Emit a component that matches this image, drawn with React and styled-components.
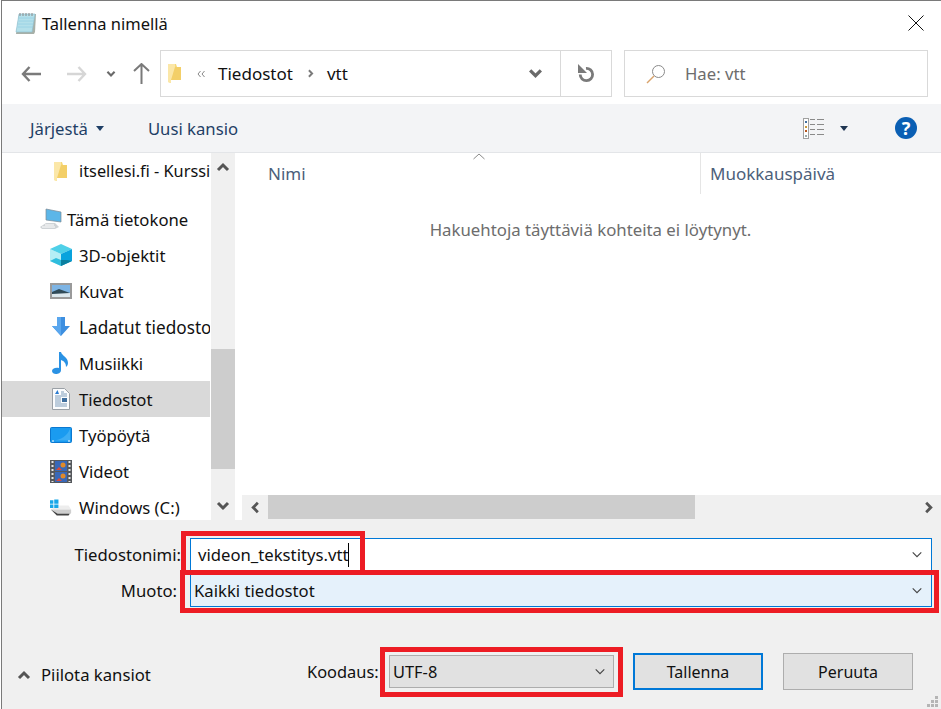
import React from "react";
import styled, { createGlobalStyle } from "styled-components";

const Global = createGlobalStyle`
  html, body { margin: 0; padding: 0; background: #fff; }
  body { font-family: "Noto Sans", "Open Sans", sans-serif; }
`;
const Page = styled.div`
  position: relative; width: 941px; height: 709px; overflow: hidden; background: #fff;
  padding-left: 1px; box-sizing: border-box;
`;
const Win = styled.div`
  height: 100%; display: flex; flex-direction: column; box-sizing: border-box;
  border-left: 1px solid #7a7a7a; border-top: 1px solid #7a7a7a; font-size: 16.7px; color: #111;
`;
const TitleBar = styled.div`
  height: 43px; flex: none; display: flex; align-items: center; padding: 0 17px 0 12px;
`;
const TitleText = styled.span`
  margin-left: 4px; font-size: 16.5px; flex: 1; position: relative; top: 1px;
`;
const NavBar = styled.div`
  height: 60px; flex: none; box-sizing: border-box; display: flex; align-items: flex-start; padding: 6px 13px 0 0;
`;
const NavBtn = styled.div`
  width: ${p => p.$w}px; height: 47px; flex: none; display: flex; align-items: center; justify-content: center;
`;
const Address = styled.div`
  width: 452px; height: 47px; margin-left: 5px; flex: none; box-sizing: border-box; border: 1px solid #d9d9d9;
  display: flex; align-items: center;
`;
const Crumbs = styled.div`
  flex: 1; display: flex; align-items: center; padding-left: 6px; font-size: 17px;
`;
const CrumbGap = styled.span`
  display: inline-flex; margin-left: ${p => p.$l}px;
`;
const AddrBtn = styled.div`
  width: ${p => p.$w}px; height: 100%; flex: none; display: flex; align-items: center; justify-content: center;
  border-left: ${p => (p.$div ? "1px solid #d9d9d9" : "none")};
`;
const Search = styled.div`
  width: 304px; height: 47px; margin-left: 12px; flex: none; box-sizing: border-box; border: 1px solid #d9d9d9;
  display: flex; align-items: center; padding-left: 21px; gap: 19px; color: #6d6d6d; font-size: 16.7px;
`;
const Toolbar = styled.div`
  height: 49px; flex: none; box-sizing: border-box; background: #f3f4f6; border-bottom: 1px solid #e3e5e8; display: flex; align-items: center;
  padding: 0 24px 0 28px; color: #1f3f66; font-size: 16.7px;
`;
const ToolBtn = styled.div`
  display: flex; align-items: center; margin-right: ${p => p.$mr || 0}px;
`;
const Spacer = styled.div`flex: 1;`;
const Help = styled.div`
  width: 22px; height: 22px; border-radius: 50%; background: #0a5fb4; color: #fff; font-weight: 700;
  font-size: 18px; line-height: 22px; text-align: center; margin-left: 47px;
`;
const Content = styled.div`
  height: 367px; flex: none; display: flex; overflow: hidden;
`;
const Sidebar = styled.div`
  width: 208px; flex: none; overflow: hidden; background: #fff;
`;
const Row = styled.div`
  height: 36px; display: flex; align-items: center; box-sizing: border-box; white-space: nowrap; overflow: hidden;
  padding-left: ${p => p.$pl}px; margin-bottom: ${p => p.$mb || 0}px; background: ${p => (p.$sel ? "#d9d9d9" : "transparent")};
  font-size: ${p => p.$fs || 16.7}px;
`;
const RowIcon = styled.span`
  width: ${p => p.$w}px; height: 24px; flex: none; display: flex; align-items: center; justify-content: center;
  margin-right: ${p => p.$mr}px;
`;
const VScroll = styled.div`
  width: 24px; margin-left: 1px; flex: none; background: #f0f0f0; display: flex; flex-direction: column; align-items: stretch;
`;
const VArrow = styled.div`
  height: 28px; flex: none; display: flex; align-items: center; justify-content: center; margin-top: ${p => p.$mt || 0}px;
`;
const VThumb = styled.div`
  height: 120px; flex: none; background: #cdcdcd; margin-top: 168px;
`;
const Main = styled.div`
  flex: 1; margin-left: 5px; display: flex; flex-direction: column; min-width: 0;
`;
const Header = styled.div`
  height: 41px; flex: none; display: flex; position: relative; color: #4c607a; font-size: 17px;
`;
const HeadCell = styled.div`
  width: ${p => p.$w}px; flex: none; box-sizing: border-box; padding: 9px 0 0 ${p => p.$pl}px; border-right: ${p => (p.$div ? "1px solid #e5e5e5" : "none")};
`;
const SortCaret = styled.svg`
  position: absolute; left: 233px; top: 0;
`;
const Empty = styled.div`
  flex: 1; text-align: center; color: #6d6d6d; font-size: 16.8px; padding-top: 24px;
`;
const HScroll = styled.div`
  height: 25px; flex: none; background: #f0f0f0; margin-left: 2px; display: flex; align-items: center;
`;
const HArrow = styled.div`
  width: 26px; height: 100%; flex: none; display: flex; align-items: center; justify-content: center;
`;
const HThumb = styled.div`
  width: 427px; height: 24px; align-self: flex-start; background: #cdcdcd;
`;
const Bottom = styled.div`
  flex: 1; background: #f0f0f0; position: relative; display: flex; flex-direction: column; padding-top: 18px;
`;
const FieldRow = styled.div`
  display: flex; align-items: center; height: 33px; margin-bottom: ${p => p.$mb || 0}px;
`;
const Label = styled.div`
  width: ${p => p.$w}px; flex: none; text-align: right; font-size: 16.7px; color: #111;
`;
const Field = styled.div`
  margin-left: ${p => p.$ml}px; width: 742px; height: 100%; box-sizing: border-box; border: 1px solid #0078d7;
  background: ${p => p.$bg}; display: flex; align-items: center; font-size: 16.7px; padding: 0 8px 0 ${p => p.$pl}px;
`;
const FieldText = styled.span`flex: 1; display: flex; align-items: center;`;
const TextCaret = styled.span`
  display: inline-block; width: 1px; height: 24px; background: #000;
`;
const Footer = styled.div`
  display: flex; align-items: center; margin-top: 46px; height: 37px;
`;
const Toggle = styled.div`
  display: flex; align-items: center; margin-left: 15px; width: 290px; gap: 10px; font-size: 16.7px; position: relative; top: 3px;
`;
const EncLabel = styled.div`font-size: 16.4px; width: 82px;`;
const Select = styled.div`
  width: 225px; height: 33px; box-sizing: border-box; border: 1px solid #adadad; background: #e1e1e1; flex: none;
  display: flex; align-items: center; justify-content: space-between; padding: 0 7px 0 3px; font-size: 16.4px;
`;
const Button = styled.div`
  width: 130px; height: 37px; box-sizing: border-box; flex: none; margin-left: ${p => p.$ml}px;
  background: #e1e1e1; border: ${p => (p.$primary ? "2px solid #0078d7" : "1px solid #adadad")};
  display: flex; align-items: center; justify-content: center; font-size: 16px;
`;
const Grip = styled.svg`
  position: absolute; right: 3px; bottom: 1px;
`;
const Mark = styled.div`
  position: absolute; left: ${p => p.$x}px; top: ${p => p.$y}px; width: ${p => p.$w}px; height: ${p => p.$h}px;
  box-sizing: border-box; border: 5px solid #ed1c24; pointer-events: none;
`;

const Folder = ({ w = 15, h = 21 }) => (
  <svg width={w} height={h} viewBox="0 0 15 21">
    <path d="M1 1h8l1 3h4v13H4v3l-3-1z" fill="#f6d878" />
    <path d="M1 1h7v15l-4 1v3l-3-1z" fill="#fbe7a8" />
    <path d="M8 4h6v13H4z" fill="#f3cf68" />
  </svg>
);
const Notepad = () => (
  <svg width="24" height="24" viewBox="0 0 24 24">
    <path d="M5 3h17l-1 18l-1 2H2z" fill="#a8b0a8" />
    <path d="M5 3h16l-3 18H2z" fill="#b4e0ea" stroke="#8cc0d2" strokeWidth=".6" />
    <path d="M5 7h15M4.500 10h15M4 13h15M3.500 16h15" stroke="#8ccbe2" strokeOpacity=".6" />
    <path d="M6 2v3M9 2v3M12 2v3M15 2v3M18 2v3" stroke="#888" />
  </svg>
);
const Computer = () => (
  <svg width="24" height="22" viewBox="0 0 24 22">
    <path d="M7 1l15 3v10L7 12z" fill="#5cb6e8" stroke="#7d8a94" strokeWidth=".7" />
    <path d="M1 19l6-4h9l4 4-4 2H3z" fill="#cfd3d6" />
    <path d="M3 19h13M6 17h9" stroke="#fff" />
  </svg>
);
const Cube = () => (
  <svg width="22" height="22" viewBox="0 0 22 22">
    <path d="M0 5l11 5v12L0 17z" fill="#b5eef5" />
    <path d="M11 0l11 5-11 5L0 5z" fill="#4fd0e8" />
    <path d="M11 10l11-5v12l-11 5z" fill="#09a3dd" />
    <path d="M0 17l6-3 5 2v6z" fill="#2fbddd" />
    <path d="M11 16l6 0 5 1-11 5z" fill="#0b7f9f" />
  </svg>
);
const Picture = () => (
  <svg width="22" height="16" viewBox="0 0 22 16">
    <rect x="1" y="1" width="20" height="14" fill="#fff" stroke="#9a9a9a" strokeWidth="2" />
    <rect x="2" y="2" width="18" height="12" fill="#7db4e4" />
    <path d="M2 9l7-3 11 4v2H2z" fill="#2f4a58" />
    <path d="M2 11l18-1v4H2z" fill="#dce8ee" />
  </svg>
);
const Download = () => (
  <svg width="20" height="20" viewBox="0 0 20 20">
    <path d="M6 0h8v9h5l-9 10L1 9h5z" fill="#3d8fe0" />
    <path d="M6 0h4v19L1 9h5z" fill="#5aa7ee" />
  </svg>
);
const Music = () => (
  <svg width="18" height="22" viewBox="0 0 18 22">
    <path d="M7 0h2c1 4 7 5 7 11 0 2-1 3-2 4 0-4-2-6-5-7v10c0 3-3 4-5 4s-4-1-4-3 3-4 7-3z" fill="#2a92e4" />
  </svg>
);
const Docs = () => (
  <svg width="18" height="22" viewBox="0 0 18 22">
    <path d="M.5.5h12l5 5v16H.5z" fill="#fbfcfd" stroke="#9aa0a6" />
    <path d="M3 6l2.500-4 1.500 4z" fill="#2a7bd0" />
    <path d="M9 4h3M9 6h6M3 8h12M3 10h6M3 12h6M3 14h6M3 16h12M3 18h12" stroke="#7f9dbb" />
    <rect x="10" y="10" width="5" height="4" fill="#3f6f9f" />
  </svg>
);
const Desktop = () => (
  <svg width="22" height="16" viewBox="0 0 22 16">
    <rect x=".5" y=".5" width="21" height="15" rx="1" fill="#1a9bf0" stroke="#0b78d0" />
    <path d="M3 13.500C11 13 17 9 20 2v11.500z" fill="#3cadf4" />
    <path d="M2 14h2M18 14h2" stroke="#fff" />
  </svg>
);
const Film = () => (
  <svg width="22" height="23" viewBox="0 0 22 23">
    <rect width="22" height="23" fill="#55585c" />
    <rect x="5" y="1" width="12" height="10" fill="#3868b8" />
    <rect x="5" y="12" width="12" height="10" fill="#3868b8" />
    <path d="M6 10l3-3 3 3zM6 21l3-3 3 3z" fill="#d84a3a" />
    <circle cx="13" cy="5" r="2.500" fill="#e08a2a" /><circle cx="13" cy="16" r="2.500" fill="#e08a2a" />
    <path d="M2.500 1v21M19.500 1v21" stroke="#e6e6e6" strokeDasharray="2 2" strokeWidth="2" />
  </svg>
);
const Drive = () => (
  <svg width="26" height="19" viewBox="0 0 26 19">
    <path d="M0 1h4v4H0zM5 0h5v5H5zM0 6h4v4H0zM5 6h5v4H5z" fill="#19a7e8" />
    <path d="M11 7h11l3 5-24 0 3-2h7z" fill="#ededed" />
    <path d="M1 12h24v4l-2 2H8z" fill="#cfcfcf" />
    <path d="M1 12l8 5h14l-1 2H8z" fill="#444" />
  </svg>
);
const Chev = ({ dir = "down", size = 14, color = "#6a6a6a", sw = 3, box = 14 }) => {
  const d = { down: "M2 4l5 5 5-5", up: "M2 10l5-5 5 5", left: "M9.500 2l-5 5 5 5", right: "M4.500 2l5 5-5 5" }[dir];
  return (
    <svg width={size} height={size} viewBox={`0 0 ${box} ${box}`}>
      <path d={d} fill="none" stroke={color} strokeWidth={sw} />
    </svg>
  );
};

const items = [
  ["3D-objektit", <Cube />],
  ["Kuvat", <Picture />],
  ["Ladatut tiedostot", <Download />, false, 17.2],
  ["Musiikki", <Music />],
  ["Tiedostot", <Docs />, true],
  ["Työpöytä", <Desktop />],
  ["Videot", <Film />],
  ["Windows (C:)", <Drive />],
];

export default function App() {
  return (
    <Page>
      <Global />
      <Win>
        <TitleBar>
          <Notepad />
          <TitleText>Tallenna nimellä</TitleText>
          <svg width="16" height="16" viewBox="0 0 16 16"><path d="M.5.5l15 15M15.500.5l-15 15" stroke="#111" fill="none" /></svg>
        </TitleBar>
        <NavBar>
          <NavBtn $w={57}>
            <svg width="20" height="16" viewBox="0 0 20 16"><path d="M8.500 1L2 8l6.500 7M2 8h18" fill="none" stroke="#7a7a7a" strokeWidth="2.400" /></svg>
          </NavBtn>
          <NavBtn $w={35}>
            <svg width="20" height="16" viewBox="0 0 20 16"><path d="M11.500 1L18 8l-6.500 7M18 8H0" fill="none" stroke="#d6d6d6" strokeWidth="2.400" /></svg>
          </NavBtn>
          <NavBtn $w={33}><Chev size={10} /></NavBtn>
          <NavBtn $w={28}>
            <svg width="17" height="21" viewBox="0 0 17 21"><path d="M1 8l7.500-7L16 8M8.500 1v20" fill="none" stroke="#7a7a7a" strokeWidth="2" /></svg>
          </NavBtn>
          <Address>
            <Crumbs>
              <Folder />
              <CrumbGap $l={15}><svg width="8" height="8" viewBox="0 0 8 8"><path d="M3.500 1L1 4l2.500 3M7.500 1L5 4l2.500 3" fill="none" stroke="#888" /></svg></CrumbGap>
              <CrumbGap $l={13}>Tiedostot</CrumbGap>
              <CrumbGap $l={13}><Chev dir="right" size={9} color="#7a7a7a" /></CrumbGap>
              <CrumbGap $l={12}>vtt</CrumbGap>
            </Crumbs>
            <AddrBtn $w={50}><Chev size={15} /></AddrBtn>
            <AddrBtn $w={50} $div>
              <svg width="19" height="19" viewBox="0 0 19 19"><path d="M9 4.300A6.200 6.200 0 1 1 3.200 10.500" fill="none" stroke="#7a7a7a" strokeWidth="2.800" /><path d="M1 0v9h9z" fill="#7a7a7a" /></svg>
            </AddrBtn>
          </Address>
          <Search>
            <svg width="20" height="20" viewBox="0 0 20 20"><circle cx="12.500" cy="7.500" r="6" fill="none" stroke="#8a8a8a" /><path d="M8 12l-7 7" stroke="#d9a36c" strokeWidth="1.500" /></svg>
            <span>Hae: vtt</span>
          </Search>
        </NavBar>
        <Toolbar>
          <ToolBtn $mr={44}>Järjestä<svg style={{ marginLeft: 8 }} width="8" height="5" viewBox="0 0 8 5"><path d="M0 0h8L4 5z" fill="#1f3f66" /></svg></ToolBtn>
          <ToolBtn>Uusi kansio</ToolBtn>
          <Spacer />
          <svg width="22" height="21" viewBox="0 0 22 21">
            <rect x=".5" y=".5" width="5" height="20" fill="#fff" stroke="#a0a0a0" />
            <path d="M2 3h2v2H2z" fill="#3f6f9f" /><path d="M2 8h2v2H2z" fill="#c99a3a" /><path d="M2 12h2v2H2z" fill="#b8561e" /><path d="M2 17h2v2H2z" fill="#9aa" />
            <path d="M7 1.500h5M14 1.500h7M7 6.500h5M14 6.500h7M7 11.500h5M14 11.500h7M7 16.500h5M14 16.500h7" stroke="#8a8a8a" />
          </svg>
          <svg style={{ marginLeft: 15 }} width="8" height="5" viewBox="0 0 8 5"><path d="M0 0h8L4 5z" fill="#1f3552" /></svg>
          <Help>?</Help>
        </Toolbar>
        <Content>
          <Sidebar>
            <Row $pl={50} $mb={12} $fs={16.3}>
              <RowIcon $w={16} $mr={11}><Folder /></RowIcon>itsellesi.fi - Kurssit
            </Row>
            <Row $pl={37}>
              <RowIcon $w={24} $mr={4}><Computer /></RowIcon>Tämä tietokone
            </Row>
            {items.map(([t, ic, sel, fs]) => (
              <Row key={t} $pl={48} $sel={sel} $fs={fs}>
                <RowIcon $w={22} $mr={7}>{ic}</RowIcon>{t}
              </Row>
            ))}
          </Sidebar>
          <VScroll>
            <VArrow><Chev dir="up" size={14} color="#555" /></VArrow>
            <VThumb />
            <VArrow $mt={23}><Chev dir="down" size={14} color="#555" /></VArrow>
          </VScroll>
          <Main>
            <Header>
              <HeadCell $w={461} $pl={28} $div>Nimi</HeadCell>
              <HeadCell $w={200} $pl={9}>Muokkauspäivä</HeadCell>
              <SortCaret width="12" height="7" viewBox="0 0 12 7"><path d="M.5 6L6 1l5.500 5" fill="none" stroke="#8a8a8a" /></SortCaret>
            </Header>
            <Empty>Hakuehtoja täyttäviä kohteita ei löytynyt.</Empty>
            <HScroll>
              <HArrow><Chev dir="left" size={13} color="#555" /></HArrow>
              <HThumb />
              <Spacer />
              <HArrow><Chev dir="right" size={13} color="#555" /></HArrow>
            </HScroll>
          </Main>
        </Content>
        <Bottom>
          <FieldRow $mb={3}>
            <Label $w={179}>Tiedostonimi:</Label>
            <Field $ml={9} $bg="#fff" $pl={7}>
              <FieldText>videon_tekstitys.vtt<TextCaret /></FieldText>
              <Chev size={12} sw={1.300} color="#444" />
            </Field>
          </FieldRow>
          <FieldRow>
            <Label $w={175}>Muoto:</Label>
            <Field $ml={13} $bg="#e5f1fb" $pl={3}>
              <FieldText>Kaikki tiedostot</FieldText>
              <Chev size={12} sw={1.300} color="#444" />
            </Field>
          </FieldRow>
          <Footer>
            <Toggle><Chev dir="up" size={14} color="#555" />Piilota kansiot</Toggle>
            <EncLabel>Koodaus:</EncLabel>
            <Select>UTF-8<Chev size={12} sw={1.300} color="#444" /></Select>
            <Button $ml={19} $primary>Tallenna</Button>
            <Button $ml={20}>Peruuta</Button>
          </Footer>
          <Grip width="12" height="12" viewBox="0 0 12 12"><path d="M9 0h3v3H9zM5 4h3v3H5zM9 4h3v3H9zM1 8h3v3H1zM5 8h3v3H5zM9 8h3v3H9z" fill="#b5b5b5" /></Grip>
        </Bottom>
      </Win>
      <Mark $x={181} $y={531} $w={184} $h={44} />
      <Mark $x={180} $y={570} $w={759} $h={43} />
      <Mark $x={380} $y={647} $w={243} $h={50} />
    </Page>
  );
}
